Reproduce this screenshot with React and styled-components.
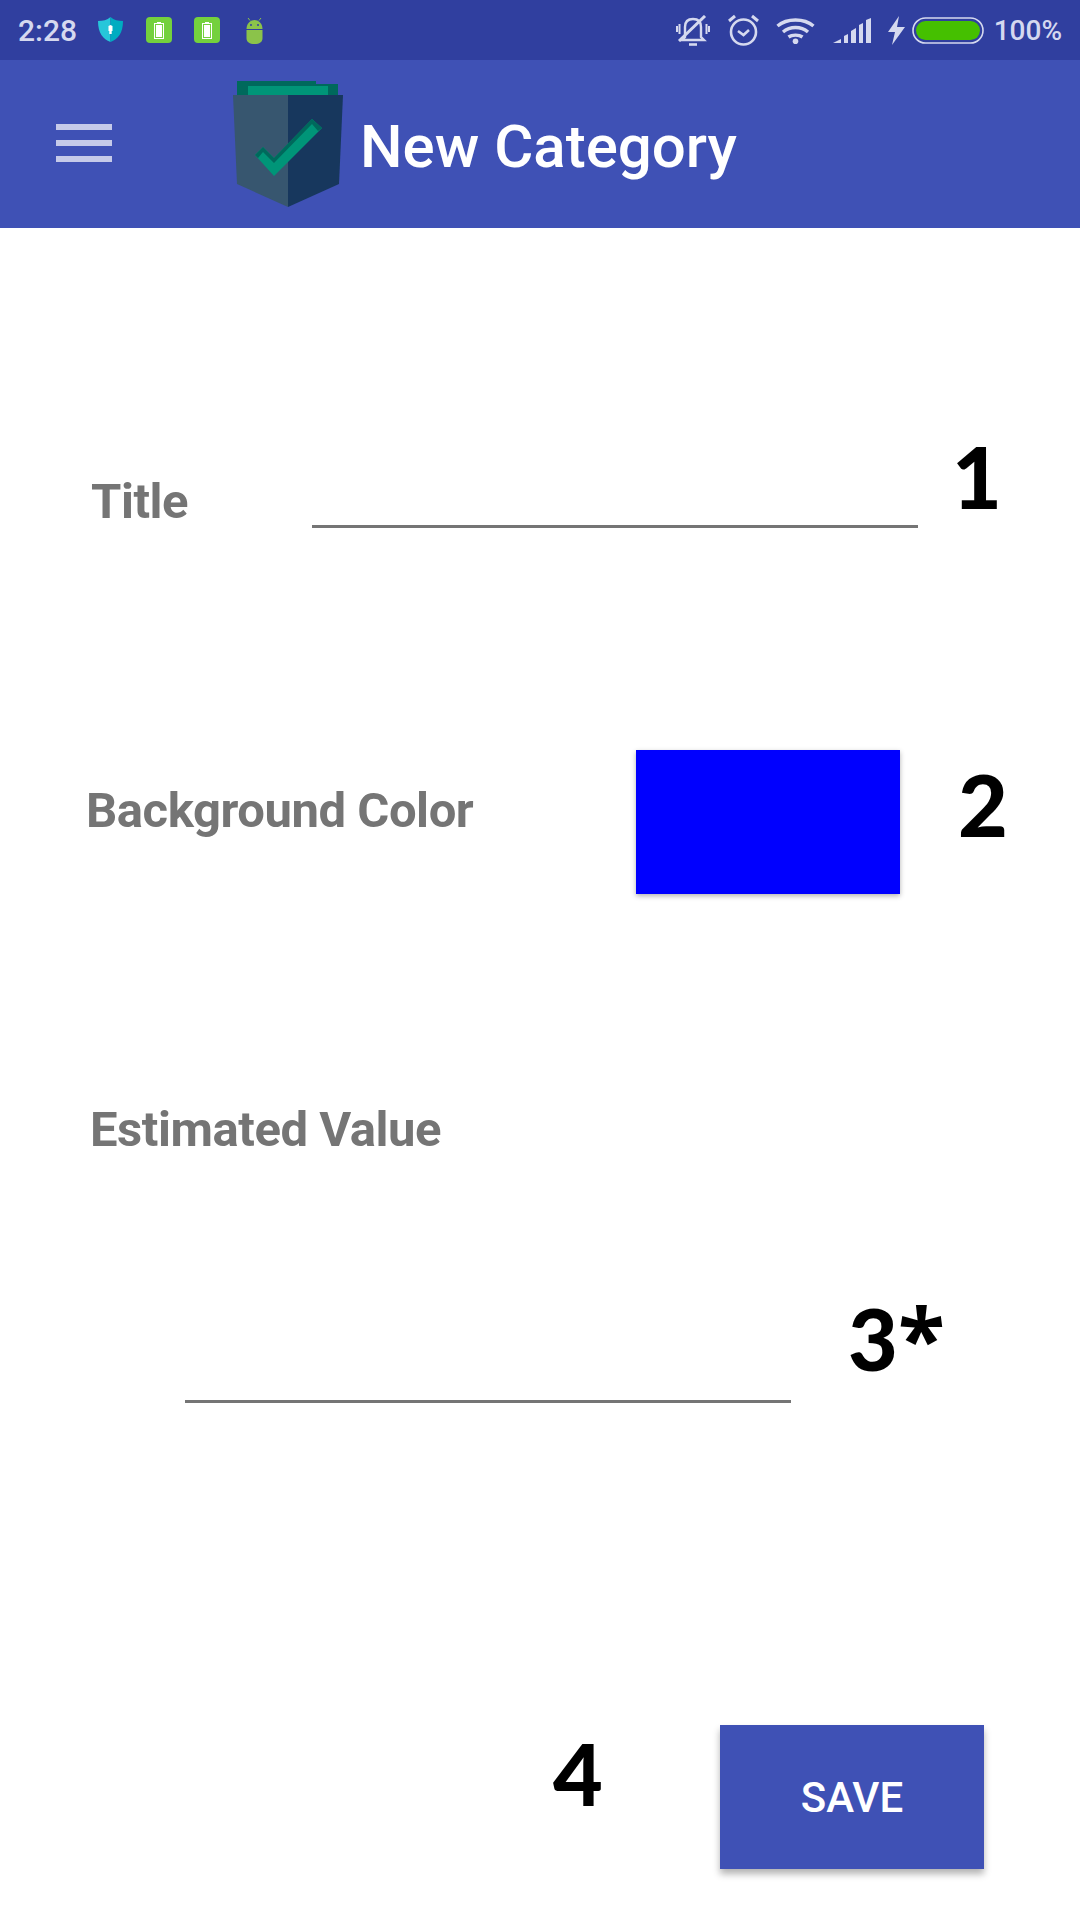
import React from "react";
import styled, { createGlobalStyle } from "styled-components";

const GlobalStyle = createGlobalStyle`
  html, body {
    margin: 0;
    padding: 0;
    background: #fff;
    font-family: Roboto, "Liberation Sans", sans-serif;
  }
`;

const Screen = styled.div`
  width: 1080px;
  height: 1920px;
  display: flex;
  flex-direction: column;
  background: #fff;
  overflow: hidden;
`;

const StatusBar = styled.div`
  height: 60px;
  flex-shrink: 0;
  background: #303f9f;
  display: flex;
  align-items: center;
  justify-content: space-between;
  padding: 0 18px 0 18px;
  color: #d5d9ef;
  font-weight: 500;
`;

const StatusGroup = styled.div`
  display: flex;
  align-items: center;
`;

const Clock = styled.span`
  font-size: 30px;
  margin-right: 20px;
`;

const Percent = styled.span`
  font-size: 28px;
  margin-left: 10px;
`;

const Slot = styled.span`
  display: flex;
  margin-right: ${(p) => p.$gap || 0}px;
`;

const AppBar = styled.header`
  height: 168px;
  flex-shrink: 0;
  background: #3f51b5;
  display: flex;
  align-items: center;
  padding-left: 56px;
`;

const Burger = styled.div`
  width: 56px;
  display: flex;
  flex-direction: column;
  gap: 10px;
  margin-right: 121px;
  margin-top: -2px;

  span {
    height: 6px;
    background: #c5cae9;
  }
`;

const AppTitle = styled.h1`
  margin: 4px 0 0 17px;
  font-size: 60px;
  font-weight: 500;
  color: #fff;
`;

const Main = styled.main`
  flex: 1;
  display: flex;
  flex-direction: column;
`;

const TitleRow = styled.div`
  display: flex;
  align-items: flex-end;
  margin-top: 216px;
  height: 84px;
  padding-left: 91px;
`;

const Label = styled.label`
  display: block;
  flex-shrink: 0;
  font-size: 49px;
  font-weight: 700;
  letter-spacing: -0.45px;
  color: #757575;
  line-height: 56px;
  width: ${(p) => (p.$width ? `${p.$width}px` : "auto")};
  margin: ${(p) => p.$margin || 0};
`;

const Underline = styled.div`
  width: 606px;
  height: 3px;
  background: #757575;
`;

const Mark = styled.span`
  font-family: Lato, "Open Sans", sans-serif;
  font-weight: 900;
  font-size: 86px;
  line-height: 88px;
  color: #000;
  width: ${(p) => (p.$width ? `${p.$width}px` : "auto")};
  margin: ${(p) => p.$margin || 0};
`;

const Star = styled.span`
  font-family: "Open Sans", sans-serif;
  font-weight: 700;
`;

const ColorRow = styled.div`
  display: flex;
  align-items: flex-start;
  margin-top: 222px;
  padding-left: 86px;
`;

const Swatch = styled.div`
  width: 264px;
  height: 144px;
  background: #0000ff;
  box-shadow: 0 2px 5px rgba(0, 0, 0, 0.3);
`;

const ValueBlock = styled.div`
  margin-top: 208px;
  padding-left: 90px;
`;

const ValueRow = styled.div`
  display: flex;
  align-items: flex-end;
  height: 98px;
  margin-top: 147px;
  padding-left: 185px;
`;

const FooterRow = styled.div`
  display: flex;
  align-items: flex-start;
  margin-top: 322px;
  padding-left: 553px;
`;

const SaveButton = styled.button`
  width: 264px;
  height: 144px;
  border: 0;
  padding: 0;
  background: #3f51b5;
  color: #fff;
  font-family: Roboto, sans-serif;
  font-size: 42px;
  font-weight: 500;
  box-shadow: 0 5px 7px rgba(0, 0, 0, 0.3);
`;

const ShieldIcon = () => (
  <svg width="27" height="26" viewBox="0 0 27 26">
    <path d="M1 4 C6 4 10 3 13.5 0 V25 C6 22 1 16 1 4Z" fill="#26c6da" />
    <path d="M26 4 C21 4 17 3 13.5 0 V25 C21 22 26 16 26 4Z" fill="#00acc1" />
    <path d="M11.5 9 L13.5 8 L15.5 9 V14 H14.7 V17 H12.3 V14 H11.5Z" fill="#fff" />
  </svg>
);

const BatteryApp = () => (
  <svg width="26" height="26" viewBox="0 0 26 26">
    <rect width="26" height="26" rx="4" fill="#74d13d" />
    <rect x="8.5" y="6.5" width="9" height="15" fill="none" stroke="#fff" strokeWidth="1" />
    <rect x="10" y="8" width="6" height="12" fill="#fff" />
    <rect x="11" y="5" width="4" height="1" fill="#fff" />
  </svg>
);

const AndroidIcon = () => (
  <svg width="17" height="27" viewBox="0 0 17 27">
    <path d="M2 1 L4 3.5 M15 1 L13 3.5" stroke="#8bc34a" strokeWidth="1" />
    <path d="M0.5 12 C0.5 6 5 3 8.5 3 C12 3 16.5 6 16.5 12Z" fill="#8bc34a" />
    <path d="M0.5 13 H16.5 V21 C16.5 25 13.5 27 8.5 27 C3.5 27 0.5 25 0.5 21Z" fill="#8bc34a" />
    <circle cx="5" cy="8" r="1" fill="#303f9f" />
    <circle cx="12" cy="8" r="1" fill="#303f9f" />
  </svg>
);

const BellOffIcon = () => (
  <svg width="34" height="31" viewBox="0 0 34 31" fill="none" stroke="#d5d9ef" strokeWidth="2.4">
    <path d="M9 22 V12 C9 7 12 4 17 4 C22 4 25 7 25 12 V22 L28 25 H6Z" />
    <path d="M13 29.5 H21" strokeWidth="2.6" />
    <path d="M3.5 9 V19 M1 11 V17 M30.5 9 V19 M33 11 V17" strokeWidth="2" />
    <path d="M3 26 L29 1" strokeWidth="3" />
  </svg>
);

const AlarmIcon = () => (
  <svg width="33" height="32" viewBox="0 0 33 32" fill="none" stroke="#d5d9ef" strokeWidth="2.6">
    <circle cx="16.5" cy="18" r="12.5" />
    <path d="M11 17 L16.5 21 L22 16" />
    <path d="M2 7 L8 2 M31 7 L25 2" strokeWidth="3" />
  </svg>
);

const WifiIcon = () => (
  <svg width="39" height="27" viewBox="0 0 39 27" fill="none" stroke="#d5d9ef" strokeWidth="3.4">
    <path d="M1.5 9 C11 1 28 1 37.5 9" />
    <path d="M7 15 C14 9 25 9 32 15" />
    <path d="M12.5 20 C16 17.5 23 17.5 26.5 20" />
    <circle cx="19.5" cy="24.2" r="2.8" fill="#d5d9ef" stroke="none" />
  </svg>
);

const SignalIcon = () => (
  <svg width="38" height="25" viewBox="0 0 38 25" fill="#d5d9ef">
    <path d="M0 25 L8 21 V25Z" />
    <path d="M11 25 V18 L15 16 V25Z" />
    <path d="M18 25 V13 L23 10 V25Z" />
    <path d="M26 25 V7 L30 5 V25Z" />
    <path d="M33 25 V2 L38 0 V25Z" />
  </svg>
);

const BoltIcon = () => (
  <svg width="17" height="29" viewBox="0 0 17 29" fill="#d5d9ef">
    <path d="M11 0 L0 16 H7 L4 29 L17 11 H9Z" />
  </svg>
);

const BatteryIcon = () => (
  <svg width="72" height="27" viewBox="0 0 72 27">
    <rect x="1" y="1" width="70" height="25" rx="12.5" fill="none" stroke="#d5d9ef" strokeWidth="1.6" />
    <rect x="4" y="4" width="64" height="19" rx="9.5" fill="#45c000" />
  </svg>
);

const LogoIcon = () => (
  <svg width="110" height="126" viewBox="0 0 110 126">
    <path d="M4 0 H83 V3 H105 V16 H4Z" fill="#00695c" />
    <rect x="15" y="5" width="80" height="9" fill="#009578" />
    <path d="M0 14 H55 V126 L4 103Z" fill="#37566f" />
    <path d="M55 14 H110 L106 103 L55 126Z" fill="#17375d" />
    <path d="M22 74 L30 66 L41 77 L79 38 L89 47 L41 95Z" fill="#009578" />
    <path d="M22 74 L30 66 L41 77 L79 38 L89 47 L85 50 L79 43 L41 82 L30 71 L25 77Z" fill="#00695c" />
  </svg>
);

export default function App() {
  return (
    <Screen>
      <GlobalStyle />
      <StatusBar>
        <StatusGroup>
          <Clock>2:28</Clock>
          <Slot $gap={22}><ShieldIcon /></Slot>
          <Slot $gap={22}><BatteryApp /></Slot>
          <Slot $gap={26}><BatteryApp /></Slot>
          <Slot><AndroidIcon /></Slot>
        </StatusGroup>
        <StatusGroup>
          <Slot $gap={17}><BellOffIcon /></Slot>
          <Slot $gap={16}><AlarmIcon /></Slot>
          <Slot $gap={18}><WifiIcon /></Slot>
          <Slot $gap={17}><SignalIcon /></Slot>
          <Slot $gap={7}><BoltIcon /></Slot>
          <Slot><BatteryIcon /></Slot>
          <Percent>100%</Percent>
        </StatusGroup>
      </StatusBar>
      <AppBar>
        <Burger>
          <span />
          <span />
          <span />
        </Burger>
        <LogoIcon />
        <AppTitle>New Category</AppTitle>
      </AppBar>
      <Main>
        <TitleRow>
          <Label $width={221} $margin="0 0 -2px 0">Title</Label>
          <Underline />
          <Mark $margin="0 0 8px 34px">1</Mark>
        </TitleRow>
        <ColorRow>
          <Label $width={550} $margin="33px 0 0 0">Background Color</Label>
          <Swatch />
          <Mark $margin="10px 0 0 58px">2</Mark>
        </ColorRow>
        <ValueBlock>
          <Label>Estimated Value</Label>
        </ValueBlock>
        <ValueRow>
          <Underline />
          <Mark $margin="0 0 21px 57px">3<Star>*</Star></Mark>
        </ValueRow>
        <FooterRow>
          <Mark $width={167} $margin="4px 0 0 0">4</Mark>
          <SaveButton>SAVE</SaveButton>
        </FooterRow>
      </Main>
    </Screen>
  );
}
